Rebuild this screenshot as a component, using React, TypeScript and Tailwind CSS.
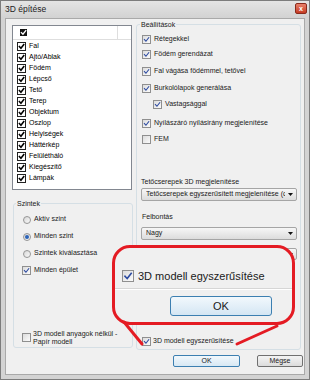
import React from "react";

const Tick = ({ color, w = 2 }: { color: string; w?: number }) => (
  <svg viewBox="0 0 10 10" className="w-full h-full">
    <path d="M2 5.2 L4.2 7.5 L8.2 2.4" fill="none" stroke={color} strokeWidth={w} strokeLinecap="square" />
  </svg>
);

function VCheck({ on, big = false }: { on: boolean; big?: boolean }) {
  return (
    <span
      className={`${big ? "w-[12px] h-[12px]" : "w-[9px] h-[9px]"} shrink-0 flex items-center justify-center border border-[#8f8f8f] bg-gradient-to-br from-[#dcdcdc] to-[#fbfbfb]`}
    >
      {on && <Tick color="#2c4aa0" w={1.6} />}
    </span>
  );
}

function XCheck() {
  return (
    <span className="w-[9px] h-[9px] shrink-0 flex items-center justify-center border border-[#222] bg-white">
      <Tick color="#000" w={2.2} />
    </span>
  );
}

function Radio({ on }: { on: boolean }) {
  return (
    <span className="w-[8px] h-[8px] shrink-0 rounded-full border border-[#969696] bg-gradient-to-br from-[#d8d8d8] to-[#fafafa] flex items-center justify-center">
      {on && <span className="w-[4px] h-[4px] rounded-full bg-[#2b63b8]" />}
    </span>
  );
}

function Select({ text, h = "h-[13px]" }: { text: string; h?: string }) {
  return (
    <div className={`${h} ml-[4px] mr-[3px] flex items-center border border-[#a5a5a5] rounded-[2px] bg-gradient-to-b from-[#f7f7f7] to-[#dcdcdc] pl-[4px] pr-[3px]`}>
      <span className="flex-1 min-w-0 overflow-hidden whitespace-nowrap">{text}</span>
      <svg width="5" height="3" viewBox="0 0 5 3" className="ml-[3px] shrink-0">
        <path d="M0 0 H5 L2.5 3 Z" fill="#111" />
      </svg>
    </div>
  );
}

const layers = [
  "Fal",
  "Ajtó/Ablak",
  "Födém",
  "Lépcső",
  "Tető",
  "Terep",
  "Objektum",
  "Oszlop",
  "Helyiségek",
  "Háttérkép",
  "Felülétháló",
  "Kiegészítő",
  "Lámpák",
];

export default function App() {
  return (
    <div className="relative w-[310px] h-[380px] bg-[#d3d3d3] border border-[#7c7c7c] font-['Liberation_Sans',Arial,sans-serif] text-[7px] text-[#1a1a1a] overflow-hidden">
      {/* title bar */}
      <div className="h-[17px] flex items-center pl-[4px] pr-[2px] bg-gradient-to-b from-[#e4e4e4] to-[#d2d2d2]">
        <span className="flex-1 text-[8.5px] text-[#222]">3D építése</span>
        <span className="w-[12px] h-[11px] -mt-[3px] rounded-[2px] border border-[#8a2a1c] bg-gradient-to-b from-[#e8806a] to-[#c53a22] flex items-center justify-center text-white text-[7px] font-bold leading-none">
          x
        </span>
      </div>

      {/* client area */}
      <div className="mx-[4px] h-[357px] bg-[#f0f0f0] border border-[#a9a9a9] flex flex-col pt-[5px]">
        <div className="flex h-[326px]">
          {/* left column */}
          <div className="w-[121px] ml-[6px] flex flex-col">
            <div className="mt-[1px] w-[120px] h-[165px] bg-white border border-[#828790] text-black">
              <div className="h-[14px] flex border-b border-[#dedede]">
                <div className="w-[105px] border-r border-[#dedede] flex items-center pl-[7px]">
                  <span className="w-[7px] h-[7px] bg-[#111] flex items-center justify-center">
                    <Tick color="#fff" w={2} />
                  </span>
                </div>
              </div>
              <div className="pt-[1px]">
                {layers.map((l) => (
                  <div key={l} className="h-[11px] flex items-center gap-[3px] pl-[4px]">
                    <XCheck />
                    <span>{l}</span>
                  </div>
                ))}
              </div>
            </div>

            <div className="relative mt-[13px] ml-[1px] w-[120px] h-[145px] border border-[#d5dfe5] rounded-[3px] flex flex-col pt-[7px] pl-[8px]">
              <span className="absolute -top-[5px] left-[2px] px-[1px] bg-[#f0f0f0] leading-[9px]">Szintek</span>
              <div className="h-[17px] flex items-center gap-[3px] pl-[1px]">
                <Radio on={false} />
                <span>Aktív szint</span>
              </div>
              <div className="h-[17px] flex items-center gap-[3px] pl-[1px]">
                <Radio on />
                <span>Minden szint</span>
              </div>
              <div className="h-[17px] flex items-center gap-[3px] pl-[1px]">
                <Radio on={false} />
                <span>Szintek kiválasztása</span>
              </div>
              <div className="h-[17px] flex items-center gap-[3px]">
                <VCheck on />
                <span>Minden épület</span>
              </div>
              <div className="mt-auto mb-[1px] flex items-start gap-[2px]">
                <span className="mt-[3px]">
                  <VCheck on={false} />
                </span>
                <span className="leading-[8px]">
                  3D modell anyagok nélkül -<br />
                  Papír modell
                </span>
              </div>
            </div>
          </div>

          {/* right column */}
          <div className="relative ml-[3px] w-[165px] h-[326px] border border-[#d5dfe5] rounded-[3px] flex flex-col">
            <span className="absolute -top-[5px] left-[3px] px-[1px] bg-[#f0f0f0] leading-[9px]">Beállítások</span>
            <div className="mt-[9px] h-[10px] flex items-center gap-[3px] pl-[5px]">
              <VCheck on />
              <span>Rétegekkel</span>
            </div>
            <div className="mt-[5px] h-[10px] flex items-center gap-[3px] pl-[5px]">
              <VCheck on />
              <span>Födém gerendázat</span>
            </div>
            <div className="mt-[7px] h-[10px] flex items-center gap-[3px] pl-[5px]">
              <VCheck on />
              <span>Fal vágása födémmel, tetővel</span>
            </div>
            <div className="mt-[7px] h-[10px] flex items-center gap-[3px] pl-[5px]">
              <VCheck on />
              <span>Burkolólapok generálása</span>
            </div>
            <div className="mt-[6px] h-[10px] flex items-center gap-[3px] pl-[16px]">
              <VCheck on />
              <span>Vastagsággal</span>
            </div>
            <div className="mt-[9px] h-[10px] flex items-center gap-[3px] pl-[5px]">
              <VCheck on />
              <span>Nyílászáró nyílásirány megjelenítése</span>
            </div>
            <div className="mt-[6px] h-[10px] flex items-center gap-[3px] pl-[5px]">
              <VCheck on={false} />
              <span>FEM</span>
            </div>
            <div className="mt-[33px] h-[10px] flex items-center pl-[4px]">Tetőcserepek 3D megjelenítése</div>
            <div className="mt-[1px]">
              <Select text="Tetőcserepek egyszerűsített megjelenítése (c" />
            </div>
            <div className="mt-[11px] h-[10px] flex items-center pl-[5px]">Felbontás</div>
            <div className="mt-[5px]">
              <Select text="Nagy" />
            </div>
            <div className="mt-[8px]">
              <Select text="" h="h-[12px]" />
            </div>
            <div className="mt-auto mb-[3px] h-[10px] flex items-center gap-[2px] pl-[5px]">
              <VCheck on />
              <span>3D modell egyszerűsítése</span>
            </div>
          </div>
        </div>

        {/* buttons */}
        <div className="mt-[5px] flex justify-end gap-[17px] pr-[1px]">
          <button className="w-[67px] h-[12px] rounded-[2px] border border-[#3c7fb1] bg-gradient-to-b from-[#f2f8fc] to-[#d7e8f4] flex items-center justify-center text-[7px]">
            OK
          </button>
          <button className="w-[46px] h-[12px] rounded-[2px] border border-[#707070] bg-gradient-to-b from-[#f4f4f4] to-[#dcdcdc] flex items-center justify-center text-[7px]">
            Mégse
          </button>
        </div>
      </div>

      {/* callout */}
      <div className="absolute left-[111px] top-[244px] w-[183px] h-[80px] border-[3px] border-[#e41b23] rounded-[18px] bg-[#f0f0f0] flex flex-col pt-[22px]">
        <div className="flex items-center gap-[4px] pl-[7px] h-[12px]">
          <VCheck on big />
          <span className="text-[11px] text-[#1a1a1a]">3D modell egyszerűsítése</span>
        </div>
        <div className="mt-[6px] border-t border-[#d6d6d6] border-b border-b-white" />
        <button className="mt-[6px] ml-[55px] w-[102px] h-[20px] rounded-[3px] border border-[#3c7fb1] bg-gradient-to-b from-[#f2f8fc] to-[#d4e6f3] flex items-center justify-center text-[11px] text-[#1a1a1a]">
          OK
        </button>
      </div>
      <svg className="absolute left-0 top-0 pointer-events-none" width="310" height="380">
        <path d="M123 321 L141 343" stroke="#e41b23" strokeWidth="3" strokeLinecap="round" fill="none" />
        <path d="M236 343 L276 325" stroke="#e41b23" strokeWidth="3" strokeLinecap="round" fill="none" />
      </svg>
    </div>
  );
}
